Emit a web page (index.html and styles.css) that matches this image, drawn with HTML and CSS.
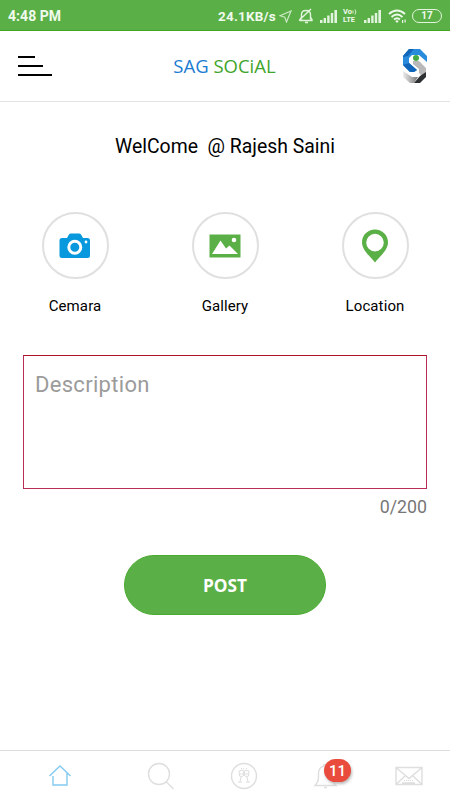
FILE: index.html
```html
<!DOCTYPE html>
<html lang="en">
<head>
<meta charset="utf-8">
<title>SAG Social</title>
<link rel="stylesheet" href="styles.css">
</head>
<body>
<div class="status">
  <span class="clock">4:48 PM</span>
  <div class="indicators">
    <span class="speed">24.1KB/s</span>
    <svg class="arrow" width="13" height="13" viewBox="0 0 13 13"><path d="M12 1 7.5 12 5.8 7.3 1 5.7Z"/></svg>
    <svg class="mute" width="16" height="16" viewBox="0 0 16 16"><path d="M3.500 11.500V6.500Q3.500 2.500 8 2.500T12.500 6.500V11.500M1.500 12.500H14.500M12.500 9 14.500 12.500M3.500 9 1.500 12.500M7 14.500H10M1 12.500 13 1"/></svg>
    <svg class="signal" width="17" height="13" viewBox="0 0 17 13"><path d="M0 13V10H2.5V13ZM3.6 13V8H6V13ZM7.2 13V5.5H9.6V13ZM10.8 13V3H13.2V13ZM14.4 13V0H17V13Z"/></svg>
    <span class="volte"><span class="vo">Vo<svg width="5" height="6" viewBox="0 0 5 6"><path d="M1 1.500V4.500M3 .5Q4.800 3 3 5.500"/></svg></span><span>LTE</span></span>
    <svg class="signal" width="17" height="13" viewBox="0 0 17 13"><path d="M0 13V10H2.5V13ZM3.6 13V8H6V13ZM7.2 13V5.5H9.6V13ZM10.8 13V3H13.2V13ZM14.4 13V0H17V13Z"/></svg>
    <svg class="wifi" width="19" height="15" viewBox="0 0 19 15"><path d="M1 5Q9 -2 17 5M3.5 8Q9 3 14.5 8M6 10.5Q9 8 12 10.5"/><path class="solid" d="M7.2 12Q9 10.7 10.8 12L9 14ZM14 11H15.2V14H14ZM16.5 10.5H17.7V13.5H16.5Z"/></svg>
    <span class="battery">17</span>
  </div>
</div>
<header class="header">
  <svg class="menu" width="36" height="24" viewBox="0 0 36 24"><path d="M0 3H17M0 12H25M0 21H34"/></svg>
  <h1 class="brand"><span class="blue">SAG</span> <span class="green">SOCiAL</span></h1>
  <svg class="logo" width="26" height="36" viewBox="0 0 26 36">
    <defs><linearGradient id="silver" x1="0" x2="1"><stop offset="0" stop-color="#eee"/><stop offset="1" stop-color="#777"/></linearGradient></defs>
    <path fill="#298bdc" d="M7 1H18L25 8V14L17 7H10L7 10V15L15 22 12 24H8L1 17V8Z"/>
    <path fill="#1266b9" d="M7 1H12L6 8 1 9V8ZM1 17 7 15 15 22 12 24H8Z"/>
    <path fill="#b9b9b9" d="M11 13H17L24 20V26L20 28 17 25V21L11 16Z"/>
    <path fill="url(#silver)" d="M1 23 10 29H16L12 35H8L1 29Z"/>
    <path fill="#2d3033" d="M18 28 24 24V29L18 35H12Z"/>
    <circle cx="14" cy="10" r="3" fill="#43ab43"/>
  </svg>
</header>
<main class="content">
  <p class="welcome">WelCome&nbsp; @ Rajesh Saini</p>
  <div class="actions">
    <div class="action"><span class="ring">
      <svg width="32" height="26" viewBox="0 0 32 26"><path fill="#0798de" d="M3 5H8L10 1.5Q10.5 .5 12 .5H20Q21.5 .5 22 1.5L24 5H28.5Q31 5 31 7.5V22.5Q31 25 28.5 25H3Q.5 25 .5 22.5V7.5Q.5 5 3 5Z"/><circle cx="15.8" cy="14.3" r="6" fill="none" stroke="#fff" stroke-width="3"/><circle cx="27" cy="9" r="1.4" fill="#fff"/></svg>
    </span><span class="label">Cemara</span></div>
    <div class="action"><span class="ring">
      <svg width="32" height="24" viewBox="0 0 32 24"><path fill="#5aaf46" d="M.5 .5H31.5V23.5H.5Z"/><path fill="#fff" d="M3 20 11.5 6.5 17 14.5 20.5 11.5 29 20Z"/><circle cx="25" cy="6" r="2.3" fill="#fff"/></svg>
    </span><span class="label">Gallery</span></div>
    <div class="action"><span class="ring">
      <svg width="28" height="34" viewBox="0 0 28 34"><path fill="#5aaf46" fill-rule="evenodd" d="M14 .5C6.800 .5 1 6 1 13.300C1 21.500 9 27 14 33.500C19 27 27 21.500 27 13.300C27 6 21.200 .5 14 .5ZM14 4.800A8.800 8.800 0 1 1 14 22.400A8.800 8.800 0 1 1 14 4.800Z"/></svg>
    </span><span class="label">Location</span></div>
  </div>
  <div class="description">Description</div>
  <div class="counter">0/200</div>
  <button class="post">POST</button>
</main>
<nav class="tabs">
  <svg class="home" width="24" height="24" viewBox="0 0 24 24"><path d="M1.500 12 12 2 22.500 12M5 12V21H19V9"/></svg>
  <svg class="search" width="28" height="28" viewBox="0 0 28 28"><circle cx="12" cy="12" r="10.500"/><path d="M19 19.500 26.500 27"/></svg>
  <svg class="club" width="28" height="28" viewBox="0 0 28 28"><circle cx="14" cy="14" r="12.500"/><g class="fine"><path d="M9 9 13 8 14 13Q12 16 9.500 14ZM15 8 19 9 18.500 14Q16 16 14 13ZM9 12H19M11 15 10 20M17 15 18 20M8 20H12M16 20H20M13.500 6V7M11 6 12 7M17 6 16 7"/></g></svg>
  <span class="alerts"><svg width="28" height="28" viewBox="0 0 28 28"><path d="M3 23.500Q6.500 20 6.500 15V11Q7 5 12 4V2.500H15V4Q20 5 20.500 11V15Q20.500 20 24 23.500ZM12 25.500H15"/></svg><span class="badge">11</span></span>
  <svg class="mail" width="28" height="20" viewBox="0 0 28 20"><path d="M1 1.500H27V18.500H1ZM1 1.500 14 12.500 27 1.500M1 18.500 10.500 9.500M27 18.500 17.500 9.500M7 17H20"/><path class="fine" d="M9 14.500H19" stroke-dasharray="1 1"/></svg>
</nav>
</body>
</html>
```

FILE: styles.css
```css
* { box-sizing: border-box; }
body { margin: 0; height: 800px; display: flex; flex-direction: column; overflow: hidden; background: #fff; font-family: Roboto, sans-serif; color: #000; }
svg { display: block; flex: none; }
.status { height: 31px; flex: none; display: flex; justify-content: space-between; align-items: center; padding: 2px 8px 0 8px; background: #5baf47; border-bottom: 1px solid #40a51f; color: #f0faed; font-weight: 700; font-size: 14px; white-space: nowrap; }
.clock { letter-spacing: .05px; }
.indicators { display: flex; align-items: center; }
.speed { width: 57px; font-size: 13.5px; letter-spacing: .2px; }
.arrow { margin: 0 6px 0 4px; fill: none; stroke: #cbe8c4; stroke-width: 1.2; }
.mute { margin-right: 6px; fill: none; stroke: #e2f4dd; stroke-width: 1.4; }
.signal { fill: #e2f4dd; }
.volte { width: 15px; margin: 0 6px; display: flex; flex-direction: column; font-size: 7.500px; line-height: 8px; }
.vo { display: flex; align-items: center; }
.vo svg { fill: none; stroke: #e2f4dd; stroke-width: .9; }
.wifi { margin: 0 5px 0 7px; fill: none; stroke: #edf9ea; stroke-width: 1.9; }
.wifi .solid { fill: #edf9ea; stroke: none; }
.battery { width: 30px; height: 14px; border: 1.500px solid #e2f4dd; border-radius: 7px; font-size: 10px; line-height: 12px; text-align: center; }
.header { height: 71px; flex: none; display: flex; align-items: center; justify-content: space-between; padding: 0 22px 0 18px; border-bottom: 1px solid #e4e4e4; }
.menu { stroke: #000; stroke-width: 2; fill: none; }
.brand { margin: 0 7px 2px 0; font: 400 18.500px "Open Sans", sans-serif; }
.blue { color: #1b7cd2; }
.green { color: #3fa52b; }
.content { flex: 1; display: flex; flex-direction: column; padding: 0 23px; }
.welcome { margin: 32px 0 0; text-align: center; font-size: 19.400px; line-height: 26px; }
.actions { display: flex; margin: 52px -23px 0; }
.action { flex: 1; display: flex; flex-direction: column; align-items: center; }
.ring { width: 67px; height: 67px; display: flex; align-items: center; justify-content: center; border: 2px solid #e0e0e0; border-radius: 50%; }
.label { margin-top: 17px; font-size: 15px; line-height: 20px; letter-spacing: .1px; }
.description { height: 134px; margin-top: 39px; padding: 15px 11px; border: 1px solid #b72d56; border-top-color: #ad1027; color: #9b9b9b; font-size: 22px; line-height: 28px; letter-spacing: .3px; }
.counter { margin-top: 7px; text-align: right; color: #777; font-size: 17.800px; line-height: 22px; }
.post { width: 202px; height: 60px; margin: 37px auto 0; border: 1px solid #4aaa30; border-radius: 30px; background: #5baf47; color: #fff; font: 700 17.300px "Open Sans", sans-serif; }
.tabs { height: 50px; flex: none; display: flex; align-items: center; padding: 0 27px 0 48px; border-top: 1px solid #dedede; fill: none; stroke: #dedede; stroke-width: 1.400; }
.home { stroke: #84caef; }
.search { margin-left: 75px; }
.club { margin-left: 55px; }
.fine { stroke-width: 1; }
.alerts { position: relative; margin-left: 54px; }
.mail { margin-left: 55px; }
.badge { position: absolute; left: 12px; top: -3px; width: 27px; height: 23px; border-radius: 12px; background: #e94b3c; box-shadow: 1px 2px 3px #bbb; color: #fff; font-size: 15px; font-weight: 500; line-height: 24px; text-align: center; }
```
